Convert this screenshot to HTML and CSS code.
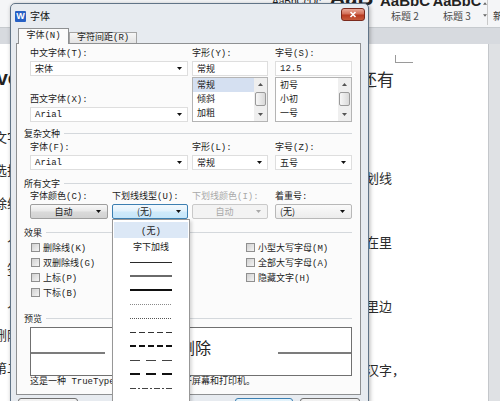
FILE: index.html
```html
<!DOCTYPE html>
<html lang="zh-CN">
<head>
<meta charset="utf-8">
<title>字体</title>
<link rel="stylesheet" href="styles.css">
</head>
<body>
<div class="app">
  <header class="ribbon">
    <div class="style-item w1">
      <div class="sample-clip"><span class="sample sm-1">AaBbCcDc</span></div>
      <span class="style-name">正文</span>
    </div>
    <div class="style-item w2">
      <div class="sample-clip"><span class="sample sm-2">AaB</span></div>
      <span class="style-name">标题 1</span>
    </div>
    <div class="style-item w3">
      <div class="sample-clip"><span class="sample sm-3">AaBbC</span></div>
      <span class="style-name">标题 2</span>
    </div>
    <div class="style-item w4">
      <div class="sample-clip"><span class="sample sm-4">AaBbC</span></div>
      <span class="style-name">标题 3</span>
    </div>
    <div class="gallery-arrows">
      <svg viewBox="0 0 5 3"><path d="M0 3H5L2.5 0Z"/></svg>
      <svg viewBox="0 0 5 3"><path d="M0 0H5L2.5 3Z"/></svg>
    </div>
    <div class="ribbon-sep"></div>
    <div class="ribbon-new">新样式</div>
  </header>
  <div class="band"></div>
  <main class="workspace">
    <div class="page">
      <div class="doc-left">
        <p class="dl-title">vo</p>
        <p class="dl-line dl-first">文字</p>
        <p class="dl-line">选择</p>
        <p class="dl-line">除线</p>
        <p class="dl-line">入</p>
        <p class="dl-line">签</p>
        <p class="dl-line">入</p>
        <p class="dl-line">删除</p>
        <p class="dl-line">第二</p>
        <p class="dl-line">入</p>
      </div>
      <div class="doc-gap"></div>
      <div class="doc-right">
        <div class="crop-mark"></div>
        <p class="dr-title">还有</p>
        <p class="dr-line dr-first">划线</p>
        <p class="dr-line"></p>
        <p class="dr-line">在里</p>
        <p class="dr-line"></p>
        <p class="dr-line">里边</p>
        <p class="dr-line"></p>
        <p class="dr-line">汉字，</p>
      </div>
    </div>
    <div class="side"></div>
  </main>

  <section class="dialog">
    <div class="titlebar">
      <span class="app-icon">W</span>
      <span class="title">字体</span>
      <span class="close"><svg viewBox="0 0 8 7"><path d="M1.5 1L6.5 6M6.5 1L1.5 6"/></svg></span>
    </div>
    <div class="client">
      <div class="tabs">
        <span class="tab active">字体(N)</span>
        <span class="tab">字符间距(R)</span>
      </div>
      <div class="panel">
        <div class="form-grid">
          <div class="stack span2">
            <span class="lbl">中文字体(T):</span>
            <div class="field sel"><span class="cjk">宋体</span><svg class="arr" viewBox="0 0 5 3"><path d="M0 0H5L2.5 3Z"/></svg></div>
            <span class="lbl lbl-gap">西文字体(X):</span>
            <div class="field sel"><span>Arial</span><svg class="arr" viewBox="0 0 5 3"><path d="M0 0H5L2.5 3Z"/></svg></div>
          </div>
          <div class="stack">
            <span class="lbl">字形(Y):</span>
            <div class="field"><span class="cjk">常规</span></div>
            <div class="list">
              <ul class="list-items">
                <li class="selected">常规</li>
                <li>倾斜</li>
                <li>加粗</li>
              </ul>
              <div class="sb">
                <span class="sb-btn"><svg viewBox="0 0 5 3"><path d="M0 3H5L2.5 0Z"/></svg></span>
                <span class="sb-thumb"></span>
                <span class="sb-space"></span>
                <span class="sb-btn"><svg viewBox="0 0 5 3"><path d="M0 0H5L2.5 3Z"/></svg></span>
              </div>
            </div>
          </div>
          <div class="stack c4">
            <span class="lbl">字号(S):</span>
            <div class="field"><span>12.5</span></div>
            <div class="list">
              <ul class="list-items">
                <li>初号</li>
                <li>小初</li>
                <li>一号</li>
              </ul>
              <div class="sb">
                <span class="sb-btn"><svg viewBox="0 0 5 3"><path d="M0 3H5L2.5 0Z"/></svg></span>
                <span class="sb-thumb"></span>
                <span class="sb-space"></span>
                <span class="sb-btn"><svg viewBox="0 0 5 3"><path d="M0 0H5L2.5 3Z"/></svg></span>
              </div>
            </div>
          </div>
        </div>

        <div class="group g-complex">复杂文种</div>
        <div class="form-grid fg-complex">
          <span class="lbl span2">字体(F):</span>
          <span class="lbl">字形(L):</span>
          <span class="lbl c4">字号(Z):</span>
          <div class="field sel span2"><span>Arial</span><svg class="arr" viewBox="0 0 5 3"><path d="M0 0H5L2.5 3Z"/></svg></div>
          <div class="field sel"><span class="cjk">常规</span><svg class="arr" viewBox="0 0 5 3"><path d="M0 0H5L2.5 3Z"/></svg></div>
          <div class="field sel c4"><span class="cjk">五号</span><svg class="arr" viewBox="0 0 5 3"><path d="M0 0H5L2.5 3Z"/></svg></div>
        </div>

        <div class="group g-all">所有文字</div>
        <div class="form-grid fg-all">
          <span class="lbl">字体颜色(C):</span>
          <span class="lbl">下划线线型(U):</span>
          <span class="lbl lbl-disabled">下划线颜色(I):</span>
          <span class="lbl c4">着重号:</span>
          <div class="btn"><span class="btn-text">自动</span><svg class="arr" viewBox="0 0 5 3"><path d="M0 0H5L2.5 3Z"/></svg></div>
          <div class="btn focus"><span class="btn-text">(无)</span><svg class="arr" viewBox="0 0 5 3"><path d="M0 0H5L2.5 3Z"/></svg></div>
          <div class="btn disabled"><span class="btn-text">自动</span><svg class="arr" viewBox="0 0 5 3"><path d="M0 0H5L2.5 3Z"/></svg></div>
          <div class="btn plain c4"><span class="btn-text">(无)</span><svg class="arr" viewBox="0 0 5 3"><path d="M0 0H5L2.5 3Z"/></svg></div>
        </div>

        <div class="group g-effects">效果</div>
        <div class="effects">
          <label class="check"><span class="box"></span>删除线(K)</label>
          <label class="check"><span class="box"></span>双删除线(G)</label>
          <label class="check"><span class="box"></span>上标(P)</label>
          <label class="check"><span class="box"></span>下标(B)</label>
          <label class="check"><span class="box"></span>小型大写字母(M)</label>
          <label class="check"><span class="box"></span>全部大写字母(A)</label>
          <label class="check"><span class="box"></span>隐藏文字(H)</label>
        </div>

        <div class="group g-preview">预览</div>
        <div class="preview">
          <span class="pv-line"></span>
          <span class="pv-text">删除</span>
          <span class="pv-line"></span>
        </div>
        <p class="desc">这是一种 TrueType 字体，同时适用于屏幕和打印机。</p>
      </div>
      <div class="footer">
        <span class="fbtn first">默认(D)...</span>
        <span class="fbtn ok">确定</span>
        <span class="fbtn">取消</span>
      </div>
    </div>
  </section>

  <ul class="dropdown">
    <li class="dd-item current">(无)</li>
    <li class="dd-item label">字下加线</li>
    <li class="dd-item"><svg viewBox="0 0 42 4"><line class="u1" x1="0" y1="2.5" x2="42" y2="2.5"/></svg></li>
    <li class="dd-item"><svg viewBox="0 0 42 4"><line class="u2" x1="0" y1="2" x2="42" y2="2"/></svg></li>
    <li class="dd-item"><svg viewBox="0 0 42 4"><line class="u3" x1="0" y1="2" x2="42" y2="2"/></svg></li>
    <li class="dd-item"><svg viewBox="0 0 42 4"><line class="u4" x1="0" y1="2.5" x2="42" y2="2.5"/></svg></li>
    <li class="dd-item"><svg viewBox="0 0 42 4"><line class="u5" x1="0" y1="2.5" x2="42" y2="2.5"/></svg></li>
    <li class="dd-item"><svg viewBox="0 0 42 4"><line class="u6" x1="0" y1="2.5" x2="42" y2="2.5"/></svg></li>
    <li class="dd-item"><svg viewBox="0 0 42 4"><line class="u7" x1="0" y1="2" x2="42" y2="2"/></svg></li>
    <li class="dd-item"><svg viewBox="0 0 42 4"><line class="u8" x1="0" y1="2.5" x2="42" y2="2.5"/></svg></li>
    <li class="dd-item"><svg viewBox="0 0 42 4"><line class="u9" x1="0" y1="2" x2="42" y2="2"/></svg></li>
    <li class="dd-item"><svg viewBox="0 0 42 4"><line class="u10" x1="0" y1="2.5" x2="42" y2="2.5"/></svg></li>
    <li class="dd-item"><svg viewBox="0 0 42 4"><line class="u11" x1="0" y1="2.5" x2="42" y2="2.5"/></svg></li>
  </ul>
</div>
</body>
</html>
```

FILE: styles.css
```css
* { box-sizing: border-box; margin: 0; padding: 0; }
html, body { width: 500px; height: 401px; overflow: hidden; background: #fff; }
body { font-family: "Noto Sans CJK SC", "Noto Sans", sans-serif; color: #1e1e1e; }
svg { display: block; }

.app { position: relative; width: 500px; height: 401px; overflow: hidden; display: flex; flex-direction: column; }

/* ---------- ribbon ---------- */
.ribbon { flex: none; height: 28px; background: #f4f5f7; border-bottom: 1px solid #c6cace; display: flex; justify-content: flex-end; }
.style-item { display: flex; flex-direction: column; align-items: center; overflow: hidden; }
.w1 { width: 57px; }
.w2 { width: 53px; }
.w3 { width: 54px; }
.w4 { width: 50px; }
.sample-clip { height: 8px; width: 100%; overflow: hidden; display: flex; justify-content: center; }
.sample { display: block; font-family: "Liberation Sans", Arial, sans-serif; line-height: 1; color: #222; white-space: nowrap; }
.sm-1 { font-size: 10px; margin-top: -3px; }
.sm-2 { font-size: 22px; font-weight: bold; margin-top: -13px; }
.sm-3 { font-size: 15px; font-weight: bold; margin-top: -7px; }
.sm-4 { font-size: 14.5px; font-weight: bold; margin-top: -6px; }
.style-name { margin-top: 3px; font-size: 10px; line-height: 10px; color: #4a4a4a; white-space: nowrap; }
.gallery-arrows { width: 5px; display: flex; flex-direction: column; align-items: center; justify-content: space-between; padding: 2px 0 10px; }
.gallery-arrows svg { width: 4px; height: 3px; fill: #666; }
.ribbon-sep { width: 1px; background: #c9c9c9; margin-bottom: 2px; }
.ribbon-new { width: 12px; padding: 10px 0 0 5px; font-size: 10px; line-height: 12px; overflow: hidden; white-space: nowrap; color: #333; }

.band { flex: none; height: 16px; background: #d7dadf; }

/* ---------- document ---------- */
.workspace { flex: 1; display: flex; min-height: 0; }
.page { flex: 1; background: #fff; display: flex; color: #2b2b2b; }
.doc-left { width: 20px; flex: none; overflow: hidden; }
.doc-left p { display: flex; justify-content: flex-end; white-space: nowrap; }
.dl-title { margin-top: 20px; height: 28px; font: bold 20px/28px "Liberation Sans", Arial, sans-serif; color: #222; }
.dl-line { height: 33px; line-height: 33px; font-size: 13px; }
.dl-first { margin-top: 28px; }
.doc-gap { flex: 1; }
.doc-right { width: 122px; flex: none; }
.crop-mark { margin: 11px 0 0 29px; width: 18px; height: 8px; border-left: 1px solid #9a9a9a; border-bottom: 1px solid #9a9a9a; }
.dr-title { margin: 4px 0 0 -6px; height: 24px; line-height: 24px; font-size: 17px; white-space: nowrap; }
.dr-line { height: 32px; line-height: 32px; font-size: 13px; white-space: nowrap; }
.dr-first { margin-top: 71px; }
.side { width: 12px; flex: none; background: #dfe1e4; border-left: 1px solid #c4c7cb; }

/* ---------- dialog ---------- */
.dialog { position: absolute; left: 10px; top: 3px; width: 359px; height: 440px; z-index: 2; background: #e7ebf0; border: 1px solid #617487; border-radius: 5px 5px 0 0; box-shadow: 1px 1px 4px rgba(0,0,0,.3); display: flex; flex-direction: column; font-family: "Liberation Mono", "Noto Sans CJK SC", monospace; font-size: 9px; color: #1b1b1b; }
.titlebar { flex: none; height: 24px; display: flex; align-items: center; padding: 0 3px 0 4px; }
.app-icon { width: 11px; height: 11px; background: #2760c4; border-radius: 1px; color: #fff; font: bold 9px/11px "Liberation Sans", Arial, sans-serif; text-align: center; }
.title { margin-left: 4px; font-family: "Noto Sans CJK SC", sans-serif; font-size: 10px; line-height: 12px; color: #111; }
.close { margin-left: auto; align-self: flex-start; margin-top: 4px; width: 24px; height: 13px; border: 1px solid #7b2a1d; border-radius: 3px; background: linear-gradient(#eaa896, #d26f58 45%, #b83a20 55%, #c65a3c); display: flex; align-items: center; justify-content: center; }
.close svg { width: 8px; height: 7px; stroke: #fff; stroke-width: 1.6; fill: none; }

.client { flex: 1; padding: 0 7px 0 5px; display: flex; flex-direction: column; }
.tabs { flex: none; height: 16px; display: flex; align-items: flex-end; padding-left: 2px; }
.tab { height: 12px; padding: 0 7px; border: 1px solid #a4a4a4; border-bottom: none; background: linear-gradient(#f6f6f6, #e2e2e2); line-height: 11px; white-space: nowrap; color: #222; }
.tab.active { height: 16px; width: 51px; padding: 0; text-align: center; line-height: 14px; background: #fbfbfb; border-color: #8e9092; position: relative; z-index: 1; }
.panel { flex: none; height: 352px; margin-top: -1px; border: 1px solid #8e9092; background: #fbfbfb; padding: 4px 8px 0 13px; }

.cjk { font-family: "Noto Sans CJK SC", sans-serif; }
.form-grid { display: grid; grid-template-columns: 78px 76px 76px 80px; column-gap: 4px; }
.span2 { grid-column: span 2; }
.c4 { margin-left: 3px; }
.stack { display: flex; flex-direction: column; min-width: 0; }
.lbl { display: block; height: 12px; line-height: 12px; white-space: nowrap; }
.lbl-gap { margin-top: 18px; }
.lbl-disabled { color: #a9a9a9; }
.field { height: 15px; margin-top: 1px; background: #fff; border: 1px solid #dedede; display: flex; align-items: center; padding-left: 4px; white-space: nowrap; }
.arr { width: 5px; height: 3px; fill: #111; flex: none; }
.sel .arr { margin-left: auto; margin-right: 5px; }

.list { margin-top: 1px; height: 45px; border: 1px solid #b4b4b4; background: #fff; display: flex; }
.list-items { list-style: none; flex: 1; }
.list-items li { height: 14px; line-height: 14px; padding-left: 4px; font-family: "Noto Sans CJK SC", sans-serif; }
.list-items li.selected { background: #d5e0f1; }
.sb { width: 13px; flex: none; background: #efefef; display: flex; flex-direction: column; align-items: center; }
.sb-btn { height: 13px; width: 100%; display: flex; align-items: center; justify-content: center; }
.sb-btn svg { width: 5px; height: 3px; fill: #555; }
.sb-thumb { width: 11px; height: 14px; margin-top: 1px; border: 1px solid #9a9a9a; border-radius: 2px; background: linear-gradient(to right, #f7f7f7, #d9d9d9); }
.sb-space { flex: 1; }

.group { display: flex; align-items: center; height: 12px; margin-left: -6px; white-space: nowrap; }
.group::after { content: ""; flex: 1; border-top: 1px solid #d4d8dc; margin-left: 4px; }
.g-complex { margin-top: 5px; }
.g-all { margin-top: 7px; }
.g-effects { margin-top: 7px; }
.g-preview { margin-top: 12px; }
.fg-complex { margin-top: 3px; }
.fg-all { margin-top: 2px; }

.btn { height: 15px; margin-top: 1px; border: 1px solid #9e9e9e; border-radius: 2px; background: linear-gradient(#f8f8f8, #e8e8e8 48%, #dadada 52%, #d2d2d2); display: flex; align-items: center; white-space: nowrap; }
.btn-text { flex: 1; text-align: center; font-family: "Noto Sans CJK SC", sans-serif; }
.btn .arr { margin-right: 6px; }
.btn.focus { border-color: #3c7fb1; background: linear-gradient(#f3f9fe, #e2f2fc 48%, #cfeafb 52%, #c6e6f9); }
.btn.disabled { border-color: #c9c9c9; background: #f3f3f3; color: #a8a8a8; }
.btn.disabled .arr { fill: #a8a8a8; }
.btn.plain { border-color: #b8b8b8; background: linear-gradient(#fafafa, #ececec); }
.btn.plain .btn-text { text-align: left; padding-left: 4px; }

.effects { margin-top: 2px; display: grid; grid-template-columns: 216px 1fr; grid-template-rows: repeat(4, 15px); grid-auto-flow: column; }
.check { display: flex; align-items: center; gap: 3px; white-space: nowrap; }
.check:nth-child(-n+4) { padding-left: 1px; }
.box { width: 9px; height: 9px; flex: none; border: 1px solid #8f8f8f; background: linear-gradient(135deg, #d0d0d0, #f4f4f4); }

.preview { margin-top: 3px; height: 49px; border: 1px solid #707070; background: #fff; display: grid; grid-template-columns: 74px 1fr 73px; align-items: start; }
.pv-line { margin-top: 24px; height: 2px; background: #7c7c7c; }
.pv-text { margin-top: 11px; font-family: "Noto Sans CJK SC", sans-serif; font-size: 16px; line-height: 17px; text-align: center; padding-left: 7px; color: #222; }
.desc { height: 12px; line-height: 12px; white-space: nowrap; }

.footer { flex: none; margin-top: 3px; display: flex; gap: 7px; padding: 0 1px 0 2px; }
.fbtn { height: 21px; width: 60px; border: 1px solid #707070; border-radius: 3px; background: linear-gradient(#f2f2f2, #ebebeb 50%, #dddddd 50%, #cfcfcf); text-align: center; line-height: 19px; font-family: "Noto Sans CJK SC", sans-serif; white-space: nowrap; }
.fbtn.first { margin-right: auto; }
.fbtn.ok { width: 58px; border-color: #3c7fb1; background: linear-gradient(#e5f4fc, #c4e5f6); }

/* ---------- dropdown menu ---------- */
.dropdown { position: absolute; left: 112px; top: 219px; width: 78px; height: 200px; z-index: 3; background: #fff; border: 1px solid #979797; padding: 2px 1px 0; list-style: none; box-shadow: 2px 2px 3px rgba(0,0,0,.15); font-family: "Liberation Mono", "Noto Sans CJK SC", monospace; font-size: 9px; color: #1b1b1b; }
.dd-item { height: 14px; display: flex; align-items: center; justify-content: center; white-space: nowrap; }
.dd-item.current { height: 16px; background: #dce8f6; }
.dd-item.label { height: 17px; }
.dd-item svg { width: 42px; height: 4px; }
.dd-item line { fill: none; }
.u1 { stroke: #2a2a2a; stroke-width: 1; }
.u2 { stroke: #6a6a6a; stroke-width: 2; }
.u3 { stroke: #111; stroke-width: 2; }
.u4 { stroke: #8a8a8a; stroke-width: 1; stroke-dasharray: 1 1; }
.u5 { stroke: #555; stroke-width: 1; stroke-dasharray: 1 1; }
.u6 { stroke: #333; stroke-width: 1; stroke-dasharray: 6 3; }
.u7 { stroke: #111; stroke-width: 2; stroke-dasharray: 6 3; }
.u8 { stroke: #444; stroke-width: 1; stroke-dasharray: 10 6; }
.u9 { stroke: #111; stroke-width: 2; stroke-dasharray: 10 6; }
.u10 { stroke: #444; stroke-width: 1; stroke-dasharray: 6 2 2 2; }
.u11 { stroke: #444; stroke-width: 1; stroke-dasharray: 6 2 2 2 2 2; }
```
